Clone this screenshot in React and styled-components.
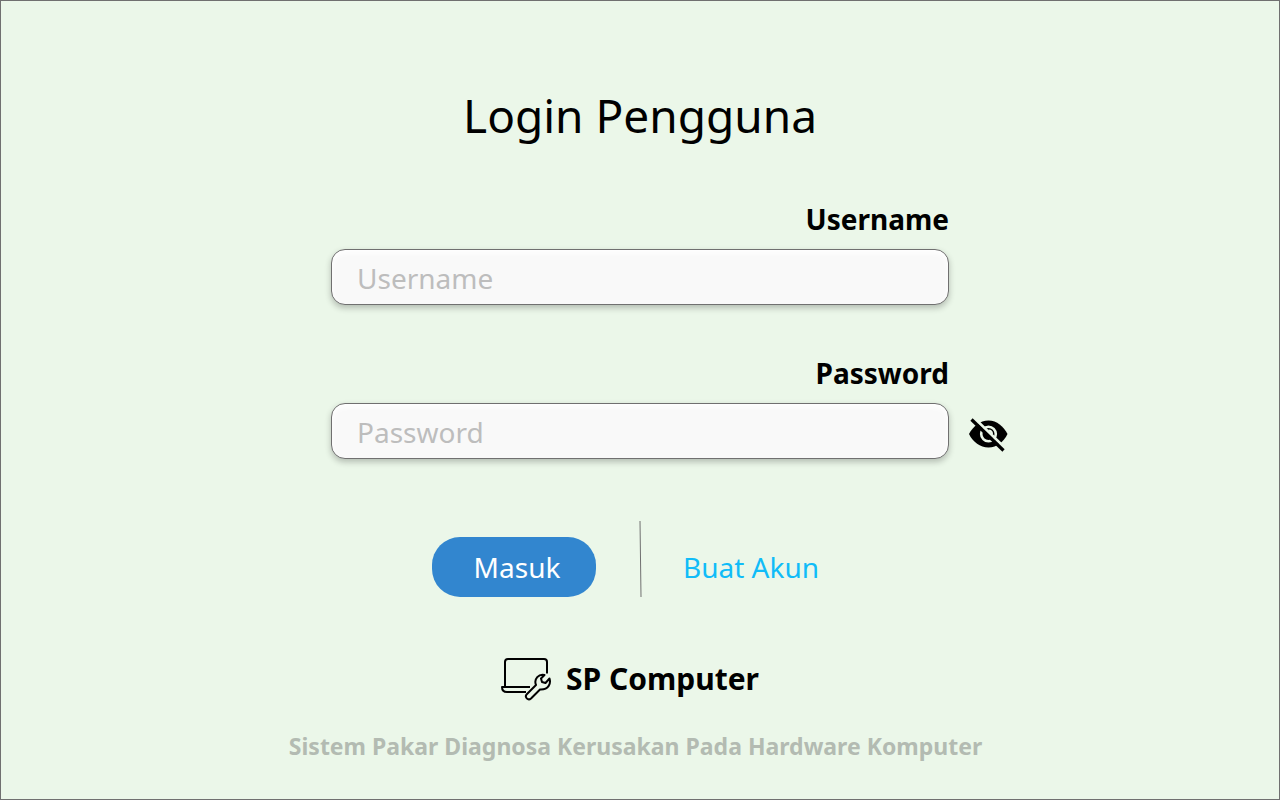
import React, { useState } from "react";
import styled, { createGlobalStyle } from "styled-components";

const GlobalStyle = createGlobalStyle`
  *, *::before, *::after { box-sizing: border-box; }
  body { margin: 0; background: #ebf7e9; }
  body, button, input { font-family: "Noto Sans", "Open Sans", sans-serif; }
`;

const Page = styled.main`
  min-height: 100vh;
  padding: 82px 16px 24px;
  border: 1px solid #707070;
  background: #ebf7e9;
  color: #000;
  display: flex;
  flex-direction: column;
  align-items: center;
`;

const Title = styled.h1`
  margin: 0 0 52px;
  font-size: 46px;
  line-height: 64px;
  font-weight: 400;
`;

const Form = styled.form`
  width: 100%;
  display: flex;
  flex-direction: column;
  align-items: center;
`;

const Field = styled.div`
  width: 100%;
  margin-bottom: 48px;
  display: grid;
  grid-template-columns: 1fr minmax(0, 618px) 1fr;
  row-gap: 10px;
  align-items: center;
`;

const Label = styled.label`
  grid-column: 2;
  justify-self: end;
  font-size: 28px;
  line-height: 40px;
  font-weight: 700;
`;

const TextInput = styled.input`
  grid-column: 2;
  width: 100%;
  height: 56px;
  padding: 2px 25px 0;
  border: 1px solid #707070;
  border-radius: 14px;
  background: #f9f9f9;
  box-shadow: 0 3px 6px rgba(0, 0, 0, 0.24), inset 0 3px 6px #fff;
  font-size: 28px;
  color: #000;

  &::placeholder { color: #bdbdbd; opacity: 1; }
`;

const ToggleButton = styled.button`
  grid-column: 3;
  justify-self: start;
  margin-left: 19px;
  padding: 8px 0 0;
  border: 0;
  background: none;
  color: #000;
  display: flex;
  cursor: pointer;
`;

const Actions = styled.div`
  width: 100%;
  max-width: 416px;
  margin-top: 14px;
  display: grid;
  grid-template-columns: 1fr auto 1fr;
  align-items: end;
`;

const SubmitButton = styled.button`
  justify-self: start;
  width: 164px;
  height: 60px;
  padding: 0 0 0 6px;
  border: 0;
  border-radius: 28px;
  background: #3286cf;
  color: #fff;
  font-size: 28px;
  cursor: pointer;
`;

const SignUpLink = styled.a`
  margin-left: 41px;
  color: #10bcf8;
  font-size: 28px;
  line-height: 60px;
  white-space: nowrap;
  text-decoration: none;
`;

const Brand = styled.div`
  margin: 58px 20px 0 0;
  display: flex;
  align-items: center;
  gap: 14px;
  font-size: 30px;
  line-height: 48px;
  font-weight: 700;
`;

const Tagline = styled.p`
  margin: 25px 9px 0 0;
  color: #b3bbb2;
  font-size: 23px;
  line-height: 36px;
  font-weight: 700;
  text-align: center;
`;

function Divider() {
  return (
    <svg width="4" height="76" viewBox="0 0 4 76" aria-hidden="true">
      <path d="M2 0L3 76" stroke="#707070" fill="none" />
    </svg>
  );
}

function EyeOff() {
  return (
    <svg width="40" height="36" viewBox="0 0 40 36" fill="none" aria-hidden="true">
      <path d="M1 17C5 9.500 12 3.500 20.500 3.500S35.500 9.500 39.500 17C35.500 25 29 30.500 20.500 30.500S5 25 1 17Z" fill="#000" />
      <circle cx="20.500" cy="17" r="7.300" stroke="#ebf7e9" strokeWidth="2.600" />
      <path d="M20.500 13.500C22.500 13.500 24 15 24 17" stroke="#ebf7e9" strokeWidth="2" />
      <path d="M5.500 0.500L38 32" stroke="#ebf7e9" strokeWidth="3" />
      <path d="M3.500 2.500L35.500 33.500" stroke="#000" strokeWidth="3.200" />
    </svg>
  );
}

function LaptopWrench() {
  return (
    <svg width="51" height="44" viewBox="0 0 51 44" fill="none" stroke="#000" strokeWidth="2" strokeLinejoin="round" aria-hidden="true">
      <path d="M4 30V5Q4 2 7 2H43Q46 2 46 5V16.500" />
      <path d="M29 30H1Q1 35 6 35H25" />
      <path d="M43.500 18L40 21.500L41 25L44.500 26L48.500 21.500C50 26 48 33 39 32.500L30 41.500C27 44 23 40 26 37L35 28C32.500 22 38 16.500 43.500 18Z" />
    </svg>
  );
}

export default function App() {
  const [visible, setVisible] = useState(false);
  return (
    <>
      <GlobalStyle />
      <Page>
        <Title>Login Pengguna</Title>
        <Form onSubmit={(e) => e.preventDefault()}>
          <Field>
            <Label htmlFor="username">Username</Label>
            <TextInput id="username" placeholder="Username" autoComplete="username" />
          </Field>
          <Field>
            <Label htmlFor="password">Password</Label>
            <TextInput
              id="password"
              type={visible ? "text" : "password"}
              placeholder="Password"
              autoComplete="current-password"
            />
            <ToggleButton type="button" aria-label="Password" aria-pressed={visible} onClick={() => setVisible(!visible)}>
              <EyeOff />
            </ToggleButton>
          </Field>
          <Actions>
            <SubmitButton type="submit">Masuk</SubmitButton>
            <Divider />
            <SignUpLink href="#daftar">Buat Akun</SignUpLink>
          </Actions>
        </Form>
        <Brand>
          <LaptopWrench />
          SP Computer
        </Brand>
        <Tagline>Sistem Pakar Diagnosa Kerusakan Pada Hardware Komputer</Tagline>
      </Page>
    </>
  );
}
